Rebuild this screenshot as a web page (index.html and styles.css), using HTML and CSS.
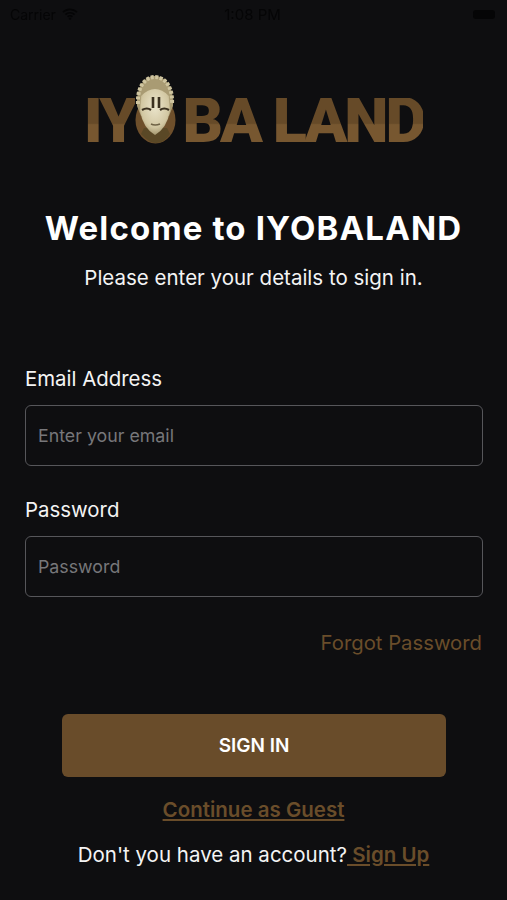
FILE: index.html
```html
<!DOCTYPE html>
<html lang="en">
<head>
  <meta charset="UTF-8">
  <meta name="viewport" content="width=device-width, initial-scale=1.0">
  <title>Iyobaland - Sign in</title>
  <link rel="stylesheet" href="styles.css">
</head>
<body>
  <div class="status-bar">
    <div class="status-left">
      <span>Carrier</span>
      <svg class="wifi" width="16" height="12" viewBox="0 0 16 12">
        <path d="M1 4.2a10 10 0 0 1 14 0M3.4 6.6a6.6 6.6 0 0 1 9.2 0M5.6 8.8a3.4 3.4 0 0 1 4.8 0" fill="none" stroke="#050506" stroke-width="1.7"/>
        <circle cx="8" cy="10.6" r="1.2" fill="#050506"/>
      </svg>
    </div>
    <span class="status-time">1:08 PM</span>
    <div class="status-right">
      <div class="battery"></div>
    </div>
  </div>

  <div class="logo">
    <span class="logo-text">IY</span>
    <svg class="mask" width="46" height="70" viewBox="0 0 46 70">
      <defs>
        <radialGradient id="face" cx="50%" cy="38%" r="65%">
          <stop offset="0" stop-color="#ebe5cc"/>
          <stop offset="0.7" stop-color="#d2c7a2"/>
          <stop offset="1" stop-color="#9c8e66"/>
        </radialGradient>
      </defs>
      <ellipse cx="23.5" cy="46" rx="20" ry="23.5" fill="#6e4f2b"/>
      <path d="M9 60q8 9 15 9q8 0 14-9l-3-6H12z" fill="#5a4826"/>
      <path d="M5 32C4 12 13 2 23 2s19 10 18 30l-4 10H9z" fill="#a99b73"/>
      <path d="M6 30C5 13 13 3 23 3s18 10 17 27" fill="none" stroke="#cfc5a0" stroke-width="4" stroke-dasharray="3 1.5"/>
      <path d="M9 22Q23 8 37 22l1 15q-3 17-15 24Q11 54 8 37z" fill="url(#face)"/>
      <path d="M21 23v11M27 23v11" stroke="#3b3120" stroke-width="2.6"/>
      <path d="M10 36q5-3 9 0M28 36q4-3 9 0" fill="none" stroke="#3b3120" stroke-width="2.2"/>
      <path d="M19 50q4 2 9 0" fill="none" stroke="#6f6346" stroke-width="1.6"/>
    </svg>
    <span class="logo-text logo-end">BA LAND</span>
  </div>

  <h1 class="title">Welcome to IYOBALAND</h1>
  <p class="subtitle">Please enter your details to sign in.</p>

  <form class="form" onsubmit="return false;">
    <label class="field-label" for="email">Email Address</label>
    <input class="field-input" type="text" id="email" placeholder="Enter your email">
    <label class="field-label" for="password">Password</label>
    <input class="field-input" type="password" id="password" placeholder="Password">
    <a class="forgot" href="#">Forgot Password</a>
    <button class="signin" type="submit">SIGN IN</button>
  </form>

  <a class="guest" href="#">Continue as Guest</a>
  <p class="signup">Don't you have an account?<a href="#"> Sign Up</a></p>
</body>
</html>
```

FILE: styles.css
```css
* {
  box-sizing: border-box;
  margin: 0;
  padding: 0;
}
body {
  font-family: Inter, "Open Sans", sans-serif;
  background-color: #0e0e10;
  color: #f4f4f4;
  height: 900px;
  overflow: hidden;
}
.status-bar {
  display: flex;
  justify-content: space-between;
  align-items: center;
  height: 28px;
  padding: 0 12px 0 10px;
  color: #050506;
  font-size: 14px;
  filter: blur(0.5px);
}
.status-left {
  flex: 1;
  display: flex;
  align-items: center;
  gap: 6px;
}
.status-time {
  font-size: 15px;
}
.status-right {
  flex: 1;
  display: flex;
  justify-content: flex-end;
}
.battery {
  width: 22px;
  height: 9px;
  background-color: #050506;
  border-radius: 3px;
}
.logo {
  display: flex;
  justify-content: center;
  align-items: flex-end;
  height: 75px;
  margin-top: 41px;
  filter: blur(0.5px);
}
.logo-text {
  font-family: Roboto, sans-serif;
  font-weight: 900;
  font-size: 63px;
  line-height: 46px;
  letter-spacing: -3px;
  color: #6e4f2b;
  background: linear-gradient(#664a28 55%, #775730 58%);
  -webkit-background-clip: text;
  background-clip: text;
  -webkit-text-fill-color: transparent;
}
.mask {
  margin: 0 0 0 -3px;
}
.logo-end {
  margin-left: 4px;
}
.title {
  font-size: 33px;
  font-weight: 700;
  letter-spacing: 1.15px;
  text-align: center;
  color: #fff;
  margin-top: 64px;
}
.subtitle {
  font-size: 20.5px;
  text-align: center;
  margin-top: 17px;
}
.form {
  display: flex;
  flex-direction: column;
  padding: 0 24px 0 25px;
  margin-top: 76px;
}
.field-label {
  font-size: 20.4px;
  line-height: 26px;
  margin-bottom: 13px;
}
.field-input {
  height: 61px;
  padding: 0 12px;
  margin-bottom: 31px;
  background: transparent;
  border: 1.5px solid #56565a;
  border-radius: 6px;
  font-family: inherit;
  font-size: 17.8px;
  color: #f4f4f4;
}
.field-input::placeholder {
  color: #77777a;
  opacity: 1;
}
.forgot {
  align-self: flex-end;
  margin-top: 2px;
  margin-right: 1px;
  font-size: 20.3px;
  color: #6a4d2a;
  text-decoration: none;
}
.signin {
  align-self: center;
  width: 384px;
  height: 63px;
  margin-top: 59px;
  background-color: #694c2a;
  border: none;
  border-radius: 6px;
  font-family: inherit;
  font-size: 19px;
  font-weight: 600;
  color: #fff;
}
.guest {
  display: block;
  text-align: center;
  margin-top: 20px;
  font-size: 20.5px;
  font-weight: 600;
  color: #6a4d2a;
}
.signup {
  text-align: center;
  margin-top: 20px;
  font-size: 20.5px;
}
.signup a {
  font-weight: 600;
  color: #6a4d2a;
}
```
